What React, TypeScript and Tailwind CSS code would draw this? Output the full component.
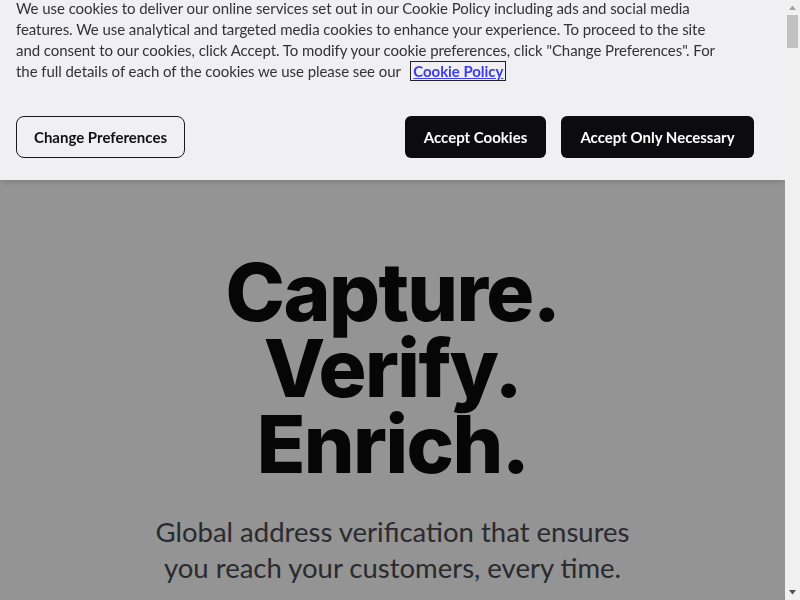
export default function App() {
  const font = { fontFamily: 'Lato, "Noto Sans", sans-serif' }

  return (
    <div className="relative h-screen overflow-hidden bg-white" style={font}>
      {/* page under the overlay */}
      <main className="mr-[15px] flex flex-col items-center pt-[254px] text-center">
        <h1
          className="text-[80px] font-extrabold leading-[76px] tracking-[-1.6px] text-[#0b0b0b]"
          style={{ fontFamily: 'Inter, sans-serif' }}
        >
          Capture.
          <br />
          Verify.
          <br />
          Enrich.
        </h1>
        <p className="mt-[32px] text-[27.5px] leading-[36px] text-[#4a4a52]">
          Global address verification that ensures
          <br />
          you reach your customers, every time.
        </p>
      </main>

      {/* dim overlay */}
      <div className="fixed top-0 bottom-0 left-0 right-[15px] z-10 bg-black/[0.42]" />

      {/* cookie banner */}
      <div className="fixed top-0 left-0 right-[15px] z-20 h-[180px] bg-[#f0f0f2] shadow-md">
        <div className="px-4">
          <p className="-mt-[2px] whitespace-nowrap text-[15px] leading-[21px] tracking-[-0.06px] text-[#333]">
            We use cookies to deliver our online services set out in our Cookie Policy including ads and social media
            <br />
            features. We use analytical and targeted media cookies to enhance your experience. To proceed to the site
            <br />
            and consent to our cookies, click Accept. To modify your cookie preferences, click "Change Preferences". For
            <br />
            the full details of each of the cookies we use please see our{' '}
            <a
              href="#"
              className="ml-[6px] border border-[#222] px-[2px] font-bold text-[#3b3bf0] underline"
            >
              Cookie Policy
            </a>
          </p>

          <div className="mt-[34px] flex w-[738px] items-center justify-between">
            <button className="h-[42px] w-[169px] rounded-lg border border-[#1a1a1a] text-[15px] font-bold text-[#111]">
              Change Preferences
            </button>
            <div className="flex gap-[15px]">
              <button className="h-[42px] w-[141px] rounded-md bg-[#0c0c0e] text-[15px] font-bold text-white">
                Accept Cookies
              </button>
              <button className="h-[42px] w-[193px] rounded-md bg-[#0c0c0e] text-[15px] font-bold text-white">
                Accept Only Necessary
              </button>
            </div>
          </div>
        </div>
      </div>

      {/* scrollbar */}
      <div className="fixed top-0 right-0 bottom-0 z-30 flex w-[15px] flex-col items-center bg-[#f1f1f1]">
        <svg width="15" height="15" viewBox="0 0 15 15" className="shrink-0">
          <path d="M4 10 L7.5 5.5 L11 10 Z" fill="#a3a3a3" />
        </svg>
        <div className="h-[33px] w-[11px] bg-[#c1c1c1]" />
        <div className="flex-1" />
        <svg width="15" height="15" viewBox="0 0 15 15" className="shrink-0">
          <path d="M4 5 L11 5 L7.5 9.5 Z" fill="#505050" />
        </svg>
      </div>
    </div>
  )
}
